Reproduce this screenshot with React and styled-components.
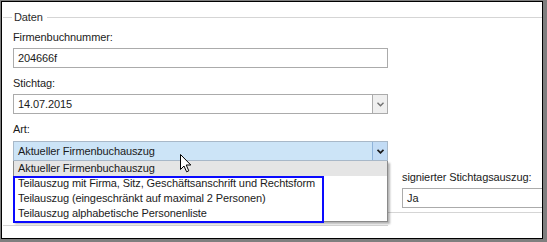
import React from "react";
import styled, { createGlobalStyle } from "styled-components";

const GlobalStyle = createGlobalStyle`
  html, body { margin: 0; padding: 0; background: #fff; }
  body {
    font-family: "Liberation Sans", Arial, sans-serif;
    font-size: 11px;
    letter-spacing: -0.1px;
    color: #1b1b1b;
  }
  * { box-sizing: border-box; }
`;

const Window = styled.div`
  position: relative;
  width: 547px;
  height: 242px;
  border-style: solid;
  border-color: #7f7f7f;
  border-width: 1px 4px 3px 1px;
  background: #fff;
`;

const Inner = styled.div`
  height: 100%;
  border: 1px solid #000;
  display: flex;
  flex-direction: column;
  overflow: hidden;
`;

const LegendRow = styled.div`
  display: flex;
  align-items: center;
  height: 14px;
  margin-top: 8px;
  padding-left: 1px;
  line-height: 14px;
  &::before {
    content: "";
    width: 9px;
    height: 1px;
    background: #d5d5d5;
  }
  &::after {
    content: "";
    flex: 1;
    height: 1px;
    background: #d5d5d5;
  }
`;

const LegendText = styled.span`
  margin: 0 4px 0 2px;
  color: #2b2b2b;
`;

const Fields = styled.div`
  display: flex;
  flex-direction: column;
  padding-left: 11px;
`;

const Field = styled.div`
  display: flex;
  flex-direction: column;
  margin-top: ${(p) => p.$top}px;
  width: 375px;
`;

const Label = styled.div`
  line-height: 14px;
  height: 14px;
  margin-bottom: ${(p) => p.$gap ?? 4}px;
  white-space: nowrap;
`;

const TextBox = styled.div`
  height: 20px;
  border: 1px solid #ababab;
  background: #fff;
  padding-left: 4px;
  line-height: 18px;
  white-space: nowrap;
`;

const ComboWrap = styled.div`
  position: relative;
`;

const Combo = styled.div`
  display: flex;
  height: 20px;
  border: 1px solid ${(p) => (p.$active ? "#a8b8c8" : "#ababab")};
  background: ${(p) => (p.$active ? "#cce4f7" : "#fff")};
`;

const ComboValue = styled.div`
  flex: 1;
  padding-left: 4px;
  line-height: 18px;
  white-space: nowrap;
`;

const ComboButton = styled.div`
  width: 15px;
  display: flex;
  align-items: center;
  justify-content: center;
  border-left: 1px solid ${(p) => (p.$active ? "#8fb3da" : "#ababab")};
  background: ${(p) => (p.$active ? "#c3dcf5" : "#efefef")};
`;

const Chevron = ({ active }) => (
  <svg width="7" height="5" viewBox="0 0 7 5">
    <path
      d="M0.5 0.8 L3.5 3.8 L6.5 0.8"
      fill="none"
      stroke={active ? "#1c1c1c" : "#707070"}
      strokeWidth={active ? 1.8 : 1.4}
    />
  </svg>
);

const DropList = styled.div`
  position: absolute;
  top: 100%;
  left: 0;
  width: 100%;
  border: 1px solid #8a8a8a;
  border-top: none;
  background: #fff;
  box-shadow: 2px 2px 2px rgba(0, 0, 0, 0.3);
  z-index: 5;
`;

const Item = styled.div`
  height: 15px;
  line-height: 15px;
  padding-left: 4px;
  white-space: nowrap;
  background: ${(p) => (p.$selected ? "#e5e5e5" : "transparent")};
`;

const Highlight = styled.div`
  position: absolute;
  left: -1px;
  top: 15px;
  width: 311px;
  height: 47px;
  border: 2px solid #0a0aff;
  pointer-events: none;
`;

const BottomRow = styled.div`
  display: flex;
  align-items: flex-start;
`;

const LeftCell = styled.div`
  margin-left: 1px;
  width: 385px;
  height: 65px;
  border-bottom: 1px solid #d5d5d5;
`;

const RightCell = styled.div`
  flex: 1;
  padding: 9px 0 4px 14px;
  border-bottom: 1px solid #d5d5d5;
  margin-right: -6px;
`;

const Cursor = styled.svg`
  position: absolute;
  left: 178px;
  top: 152px;
  z-index: 10;
`;

const Select = ({ value, active, children }) => (
  <ComboWrap>
    <Combo $active={active}>
      <ComboValue>{value}</ComboValue>
      <ComboButton $active={active}>
        <Chevron active={active} />
      </ComboButton>
    </Combo>
    {children}
  </ComboWrap>
);

const options = [
  "Aktueller Firmenbuchauszug",
  "Teilauszug mit Firma, Sitz, Geschäftsanschrift und Rechtsform",
  "Teilauszug (eingeschränkt auf maximal 2 Personen)",
  "Teilauszug alphabetische Personenliste",
];

export default function App() {
  return (
    <>
      <GlobalStyle />
      <Window>
        <Inner>
          <LegendRow>
            <LegendText>Daten</LegendText>
          </LegendRow>
          <Fields>
            <Field $top={6}>
              <Label>Firmenbuchnummer:</Label>
              <TextBox>204666f</TextBox>
            </Field>
            <Field $top={8}>
              <Label>Stichtag:</Label>
              <Select value="14.07.2015" />
            </Field>
            <Field $top={8}>
              <Label $gap={5}>Art:</Label>
              <Select value="Aktueller Firmenbuchauszug" active>
                <DropList>
                  {options.map((o, i) => (
                    <Item key={o} $selected={i === 0}>
                      {o}
                    </Item>
                  ))}
                  <Highlight />
                </DropList>
              </Select>
            </Field>
          </Fields>
          <BottomRow>
            <LeftCell />
            <RightCell>
              <Label>signierter Stichtagsauszug:</Label>
              <TextBox>Ja</TextBox>
            </RightCell>
          </BottomRow>
        </Inner>
        <Cursor width="13" height="20" viewBox="0 0 13 20">
          <path
            d="M1.5 1.5 L1.5 16.5 L5 13 L7.6 18.8 L9.8 17.8 L7.2 12 L11.8 12 Z"
            fill="#fff"
            stroke="#000"
            strokeWidth="1"
            strokeLinejoin="miter"
          />
        </Cursor>
      </Window>
    </>
  );
}
